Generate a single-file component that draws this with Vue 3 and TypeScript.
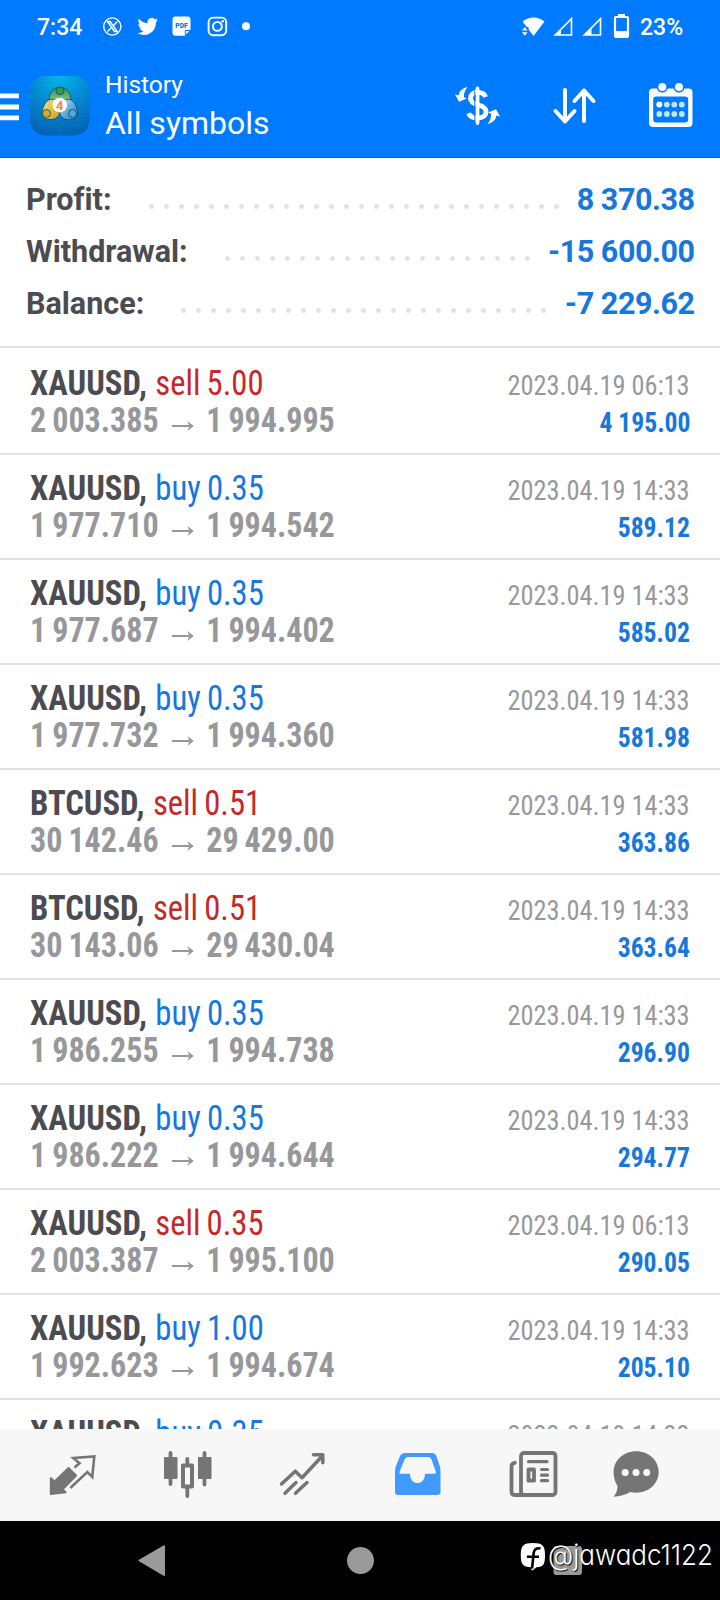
<script setup lang="ts">
interface Summary {
  label: string
  value: string
  dots: number
}
interface Deal {
  symbol: string
  side: 'buy' | 'sell'
  volume: string
  open: string
  close: string
  time: string
  profit: string
}

const summary: Summary[] = [
  { label: 'Profit:', value: '8 370.38', dots: 28 },
  { label: 'Withdrawal:', value: '-15 600.00', dots: 21 },
  { label: 'Balance:', value: '-7 229.62', dots: 25 },
]

const early = '2023.04.19 06:13'
const late = '2023.04.19 14:33'

const deals: Deal[] = [
  { symbol: 'XAUUSD', side: 'sell', volume: '5.00', open: '2 003.385', close: '1 994.995', time: early, profit: '4 195.00' },
  { symbol: 'XAUUSD', side: 'buy', volume: '0.35', open: '1 977.710', close: '1 994.542', time: late, profit: '589.12' },
  { symbol: 'XAUUSD', side: 'buy', volume: '0.35', open: '1 977.687', close: '1 994.402', time: late, profit: '585.02' },
  { symbol: 'XAUUSD', side: 'buy', volume: '0.35', open: '1 977.732', close: '1 994.360', time: late, profit: '581.98' },
  { symbol: 'BTCUSD', side: 'sell', volume: '0.51', open: '30 142.46', close: '29 429.00', time: late, profit: '363.86' },
  { symbol: 'BTCUSD', side: 'sell', volume: '0.51', open: '30 143.06', close: '29 430.04', time: late, profit: '363.64' },
  { symbol: 'XAUUSD', side: 'buy', volume: '0.35', open: '1 986.255', close: '1 994.738', time: late, profit: '296.90' },
  { symbol: 'XAUUSD', side: 'buy', volume: '0.35', open: '1 986.222', close: '1 994.644', time: late, profit: '294.77' },
  { symbol: 'XAUUSD', side: 'sell', volume: '0.35', open: '2 003.387', close: '1 995.100', time: early, profit: '290.05' },
  { symbol: 'XAUUSD', side: 'buy', volume: '1.00', open: '1 992.623', close: '1 994.674', time: late, profit: '205.10' },
  { symbol: 'XAUUSD', side: 'buy', volume: '0.35', open: '', close: '', time: late, profit: '' },
]
</script>

<template>
  <div class="screen">
    <header class="top">
      <div class="status">
        <span class="clock">7:34</span>
        <svg class="notes" viewBox="100 12 152 30" width="152" height="30">
          <g fill="none" stroke="#fff">
            <circle cx="112.3" cy="26.5" r="8.6" stroke-width="1.4" />
            <path d="M107.5 21.5h2.6l7 10h-2.6zM117.3 21.5l-4 4.2M111.3 27.8l-3.8 3.7" stroke-width="1.5" />
            <rect x="208.6" y="17.6" width="17.6" height="17.6" rx="4.6" stroke-width="1.9" />
            <circle cx="217.4" cy="26.4" r="4.4" stroke-width="2" />
          </g>
          <g fill="#fff">
            <path d="M158 19.9c-.8.4-1.6.6-2.4.7.9-.5 1.5-1.3 1.8-2.3-.8.5-1.7.8-2.6 1a4.2 4.2 0 0 0-7.2 3.9c-3.5-.2-6.6-1.9-8.7-4.5-1.2 2-.5 4.4 1.3 5.7-.7 0-1.3-.2-1.9-.5 0 2 1.4 3.8 3.4 4.2-.6.2-1.2.2-1.9.1.5 1.7 2.1 2.900 4 2.900A8.500 8.500 0 0 1 137.500 33c1.900 1.200 4.100 1.900 6.500 1.900 7.800 0 12.200-6.600 11.900-12.700.8-.6 1.500-1.400 2.100-2.300z" />
            <path d="M175.500 16.500h12a3 3 0 0 1 3 3v10.700l-5.600 5.600h-9.400a3 3 0 0 1-3-3V19.500a3 3 0 0 1 3-3z" />
            <circle cx="222.700" cy="21.200" r="1.300" />
            <circle cx="246" cy="26.200" r="4" />
          </g>
          <path d="M185.300 35.500v-5h5z" fill="#fff" stroke="#007aff" stroke-width="1" />
          <text x="181.500" y="28.400" text-anchor="middle" font-size="6.800" font-weight="900" fill="#007aff">PDF</text>
        </svg>
        <svg class="radio" viewBox="520 12 112 30" width="112" height="30">
          <path d="M522.500 21.500Q533.500 13.500 544.500 21.500L533.500 36z" fill="#fff" />
          <path d="M521 27h7.500v9.500H521z" fill="#007aff" />
          <path d="M522 30.500l2.800-3.500 2.800 3.500zM522 32.300l2.800 3.500 2.800-3.500z" fill="#fff" />
          <path d="M571.500 18.800V35h-16.200zM600.500 18.800V35h-16.200z" fill="none" stroke="#fff" stroke-width="1.600" />
          <path d="M561 29.500V35h-6.500zM591.500 28V35h-7.500z" fill="#fff" />
          <path d="M618 14h7v2.500h-7z" fill="#fff" />
          <rect x="615" y="17" width="13" height="20" rx="1" fill="none" stroke="#fff" stroke-width="2.200" />
          <path d="M615 31h13v6.500h-13z" fill="#fff" />
        </svg>
        <span class="charge">23%</span>
      </div>

      <div class="bar">
        <svg viewBox="0 76 20 60" width="20" height="60">
          <path d="M0 95.800h19M0 107h19M0 117.800h19" stroke="#fff" stroke-width="4.800" />
        </svg>
        <svg class="logo" viewBox="0 0 60 60" width="60" height="60">
          <defs>
            <radialGradient id="sea" cx=".5" cy="0" r="1">
              <stop offset="0" stop-color="#06b5e6" />
              <stop offset=".55" stop-color="#0483cf" />
              <stop offset="1" stop-color="#0263b4" />
            </radialGradient>
            <linearGradient id="leaf" x2="0" y2="1">
              <stop offset="0" stop-color="#2f9550" />
              <stop offset="1" stop-color="#a5d99a" />
            </linearGradient>
            <linearGradient id="gold" x2="1" y2="1">
              <stop offset="0" stop-color="#f1e389" />
              <stop offset="1" stop-color="#cba01d" />
            </linearGradient>
            <linearGradient id="sky" x2="1" y2="1">
              <stop offset="0" stop-color="#b5e6fa" />
              <stop offset="1" stop-color="#1978c5" />
            </linearGradient>
          </defs>
          <rect width="59.500" height="59.500" rx="15" fill="url(#sea)" />
          <path d="M0 10h60M0 20h60M0 30h60M0 40h60M0 50h60M10 0v60M20 0v60M30 0v60M40 0v60M50 0v60" stroke="#5cc3ee" stroke-opacity=".1" stroke-width=".7" />
          <g stroke="#174f68" stroke-width=".9">
            <path d="M30 11.500c6.500 0 10.500 5 10.500 10.500 0 4-4 8-10.500 8s-10.500-4-10.500-8c0-5.500 4-10.500 10.500-10.500z" fill="url(#leaf)" />
            <path d="M20 23.500c5-1.500 10 2 10.500 8.500.4 6-3 11.500-9.500 11.500-5.500 0-9-2-9-5.500 0-6 3-13 8-14.500z" fill="url(#gold)" />
            <path d="M40 23.500c5 1.500 7.500 8.500 7.500 14.500 0 3.500-3.500 5.800-9 5.800-6 0-9.500-5-9.500-10.800 0-6.500 6-11 11-9.500z" fill="url(#sky)" />
            <circle cx="30" cy="14.800" r="4" fill="#369a50" />
            <circle cx="16.500" cy="37.500" r="4" fill="#d3aa2c" />
            <circle cx="42.500" cy="37.500" r="4" fill="#4ea8e2" />
          </g>
          <circle cx="29.800" cy="29" r="7.300" fill="#fff" />
          <text x="29.500" y="33.800" text-anchor="middle" font-size="13.500" font-weight="700" fill="#e98a4e">4</text>
        </svg>
        <div class="titles">
          <span class="small">History</span>
          <span class="big">All symbols</span>
        </div>
        <svg class="tools" viewBox="450 76 250 60" width="250" height="60">
          <g fill="none" stroke="#fff" stroke-linecap="round">
            <path d="M477.500 88.500v34.500" stroke-width="3.800" />
            <path d="M485.500 97c-1-3.600-4-4.600-8-4.600-4.600 0-7 2.400-7 5.800 0 3.600 2.600 5.200 7.500 6.600 5 1.400 8 3 8 6.800s-3 6.400-8 6.400c-5 0-8.300-1.600-9.300-4.800" stroke-width="4.800" stroke-linecap="butt" />
            <path d="M565 90v31M555.500 111l9.500 10.500 9.500-10.500M584 121V90.500M574.500 101l9.500-10.500 9.500 10.500" stroke-width="4" stroke-linejoin="round" />
          </g>
          <path d="M474.800 91v29" stroke="#007aff" stroke-width="1" />
          <g fill="#fff">
            <path d="M467.500 87c-5.500 1.200-8.400 4.500-8.700 8.200l-3.800-.7 4 7.300 7.800-3.200-2.800-1.300c-.3-4 .8-7 3.500-10.300z" />
            <path d="M487.500 124c5.500-1.200 8.400-4.500 8.700-8.200l3.800.7-4-7.300-7.800 3.200 2.800 1.300c.3 4-.8 7-3.500 10.300z" />
            <rect x="649" y="88.500" width="43.500" height="38.500" rx="4" />
          </g>
          <rect x="653.200" y="96.500" width="35" height="26" rx="3" fill="#007aff" />
          <g fill="#fff" stroke="#007aff" stroke-width="1.600">
            <circle cx="662.300" cy="87" r="4.800" />
            <circle cx="679" cy="87" r="4.800" />
          </g>
          <g fill="#c2e5ff">
            <circle cx="659.300" cy="104.600" r="3" fill="#fff" />
            <circle cx="666.800" cy="104.600" r="2.900" />
            <circle cx="674.300" cy="104.600" r="2.900" />
            <circle cx="681.800" cy="104.600" r="2.900" />
            <circle cx="659.300" cy="114" r="2.900" />
            <circle cx="666.800" cy="114" r="2.900" />
            <circle cx="674.300" cy="114" r="2.900" />
            <circle cx="681.800" cy="114" r="2.900" />
          </g>
        </svg>
      </div>
    </header>

    <section class="summary">
      <div v-for="s in summary" :key="s.label" class="total">
        <span class="label">{{ s.label }}</span>
        <span class="leader" :style="{ width: s.dots * 15 + 'px' }"></span>
        <span class="amount">{{ s.value }}</span>
      </div>
    </section>

    <main class="list">
      <div v-for="(d, i) in deals" :key="i" class="deal">
        <div class="line">
          <span class="what"><b>{{ d.symbol }},</b><span :class="d.side">{{ d.side }} {{ d.volume }}</span></span>
          <span class="time">{{ d.time }}</span>
        </div>
        <div v-if="d.open" class="line">
          <span class="prices">
            <span>{{ d.open }}</span>
            <svg viewBox="0 0 24 12" width="24" height="12"><path d="M0 6h20" fill="none" stroke="#97989b" stroke-width="2.200" /><path d="M17 1l7 5-7 5 2.200-5z" fill="#97989b" /></svg>
            <span>{{ d.close }}</span>
          </span>
          <span class="profit">{{ d.profit }}</span>
        </div>
      </div>
    </main>

    <nav class="tabs">
      <svg viewBox="0 1429 720 92" width="720" height="92">
        <g fill="#757575" stroke="#757575" stroke-linejoin="round">
          <path d="M50.700 1478v16l15-1.700-3-3 13.500-13.800-7.700-7.500-14 13.500z" stroke-width="1.800" />
          <path d="M74.500 1467.500l5-4.300-6.200-5.200 21-1.500-2 20.500-5-5-17 16" fill="none" stroke-width="2.600" stroke-linejoin="miter" />
          <path d="M170.500 1453v31M204.500 1453v31.500M187.300 1459v5M187.300 1488v8" stroke-width="3.800" stroke-linecap="round" />
          <path d="M165 1458h11.500v20H165zM199 1458h11.500v20H199z" stroke-width="2" />
          <path d="M183 1465.500h9v21h-9z" fill="none" stroke-width="4" />
          <path d="M281.500 1484l13.800-12.800 6.700 6.500 20.500-22M313.500 1454.800h9.300v8M285 1493.300l11-10.800M295.500 1493.300l11.500-10.800" fill="none" stroke-width="3.500" stroke-linecap="round" />
        </g>
        <path fill="#419aff" fill-rule="evenodd" d="M405 1453h27q3 0 4.300 3l3.500 10q.7 2 .7 8v18q0 3-3 3h-39.500q-3 0-3-3v-18q0-6 1-8l4-10q1.500-3 5-3zM407.500 1457q-2 0-3 2.500l-5 12.500q-.6 1.700 1 1.700h9.500c0 12.500 15 12.500 15 0h9.500q2 0 1.400-2l-4.400-12.200q-1-2.500-3-2.500z" />
        <g fill="none" stroke="#757575" stroke-width="3.800" stroke-linecap="round" stroke-linejoin="round">
          <rect x="521" y="1453" width="34.500" height="42" rx="3" />
          <path d="M514.800 1462.800q-3.300.7-3.300 3.500v25.500q0 3.200 3.300 3.200h8.200" />
          <path d="M528.500 1461.700h18.500M541.500 1469.500h6M541.500 1475.200h6M541.500 1480.700h6" stroke-width="3.200" />
          <path d="M528.500 1469.500h5.500v11.200h-5.500z" />
        </g>
        <path fill="#757575" d="M636.200 1451.300c12.500 0 22.500 9.200 22.500 20.700s-10 20.700-22.500 20.700c-2 0-4-.2-6-.6-5 2.800-10 4.600-16.700 4.700 2.600-3 4-6.500 4-10.800-2.500-3.700-3.900-8.800-3.900-14 0-11.500 10.100-20.700 22.600-20.700z" />
        <g fill="#f7f7f7">
          <circle cx="625.200" cy="1472.500" r="3.500" />
          <circle cx="636" cy="1472.500" r="3.500" />
          <circle cx="646.700" cy="1472.500" r="3.500" />
        </g>
      </svg>
    </nav>

    <footer class="system">
      <svg viewBox="0 1521 720 79" width="720" height="79">
        <g fill="#9a9a9a">
          <path d="M139.500 1560.500L164 1546.300v28.600z" stroke="#9a9a9a" stroke-width="2" stroke-linejoin="round" />
          <circle cx="360.500" cy="1560.500" r="13.500" />
          <rect x="553.500" y="1546" width="28.500" height="29" rx="3" />
        </g>
      </svg>
      <div class="credit">
        <svg viewBox="520 1542 26 30" width="26" height="30">
          <path fill="#fff" d="M533 1543c9.500 0 12 2.500 12 12s-1.500 12-8.500 12.300l-4.500 3.500-1-3.500c-8-.3-10.200-2.800-10.200-12.300s2.700-12 12.200-12z" />
          <path fill="none" stroke="#000" stroke-width="2.600" d="M540.500 1548.500c-4-1-6.500 1-6.800 4.500l-1.700 15.500M527 1556.800h12" />
        </svg>
        <span class="handle">@jawadc1122</span>
      </div>
    </footer>
  </div>
</template>

<style>
body {
  background: #fff;
}
</style>

<style scoped>
.screen {
  display: flex;
  flex-direction: column;
  width: 720px;
  height: 1600px;
  overflow: hidden;
  background: #fff;
  font-family: Roboto, "Liberation Sans", sans-serif;
}
.screen svg {
  display: block;
  flex: none;
}
.screen span {
  white-space: nowrap;
}
.top {
  box-sizing: border-box;
  flex: none;
  height: 158px;
  background: #007aff;
  border-bottom: 1px solid #0a6ad4;
  color: #fff;
}
.status {
  display: flex;
  align-items: center;
  height: 54px;
  padding: 0 37px 0 36px;
  font-size: 23px;
  font-weight: 500;
}
.clock {
  width: 63px;
  padding-left: 1px;
}
.radio {
  margin-left: auto;
  margin-right: 8px;
}
.charge {
  width: 43px;
}
.bar {
  display: flex;
  align-items: center;
  height: 60px;
  margin-top: 22px;
}
.logo {
  margin-left: 10.400px;
}
.titles {
  display: flex;
  flex-direction: column;
  margin-left: 14.600px;
}
.small {
  font-size: 24.500px;
  line-height: 34px;
}
.big {
  font-size: 32px;
  line-height: 42px;
}
.tools {
  margin-left: auto;
  margin-right: 20px;
}
.summary {
  box-sizing: border-box;
  flex: none;
  height: 190px;
  padding: 15px 26px 0;
  border-bottom: 2px solid #e2e2e2;
}
.total {
  display: flex;
  align-items: center;
  height: 52px;
  font-size: 30.500px;
  font-weight: 700;
  font-variant-ligatures: none;
  color: #4b4b50;
}
.leader {
  height: 5px;
  margin: 14px 0 0 32px;
  background: radial-gradient(circle at 7.500px 2.500px, #e3e3e5 2px, transparent 2.800px) 0 0 / 15px 5px repeat-x;
}
.amount {
  margin-left: auto;
  margin-right: -0.500px;
  letter-spacing: -0.450px;
  color: #1677dd;
}
.list {
  flex: 1;
  min-height: 0;
  padding-top: 2px;
  overflow: hidden;
}
.deal {
  box-sizing: border-box;
  height: 105px;
  padding: 14px 30px 0;
  border-bottom: 2px solid #e2e2e2;
  font-stretch: 75%;
}
.line {
  display: flex;
  justify-content: space-between;
  align-items: baseline;
  height: 37px;
  line-height: 40px;
}
.what,
.prices {
  font-size: 35px;
  word-spacing: -1.500px;
  transform-origin: left;
}
.what {
  transform: scaleX(0.933);
}
.what b {
  margin-right: 9px;
  color: #4b4b50;
  font-weight: 700;
}
.sell {
  color: #c62828;
}
.buy {
  color: #1677dd;
}
.prices {
  display: flex;
  align-items: baseline;
  gap: 14px;
  color: #97989b;
  font-weight: 700;
  transform: scaleX(0.915);
}
.time,
.profit {
  font-size: 28px;
  transform-origin: right;
}
.time {
  color: #97989b;
  transform: scaleX(0.940);
}
.profit {
  color: #1677dd;
  font-weight: 700;
  transform: scaleX(0.915);
}
.tabs {
  flex: none;
  height: 92px;
  background: #f7f7f7;
}
.system {
  position: relative;
  flex: none;
  height: 79px;
  background: #000;
}
.credit {
  position: absolute;
  top: 21px;
  left: 520px;
  display: flex;
  align-items: center;
  gap: 2px;
  color: #fff;
}
.handle {
  margin-top: -4px;
  font-family: Inter, "Open Sans", sans-serif;
  font-feature-settings: "cv11";
  font-size: 28px;
  font-weight: 300;
  line-height: 30px;
  text-shadow: 1px 1px 1px #000;
  transform: scaleX(0.928);
  transform-origin: left;
}
</style>
